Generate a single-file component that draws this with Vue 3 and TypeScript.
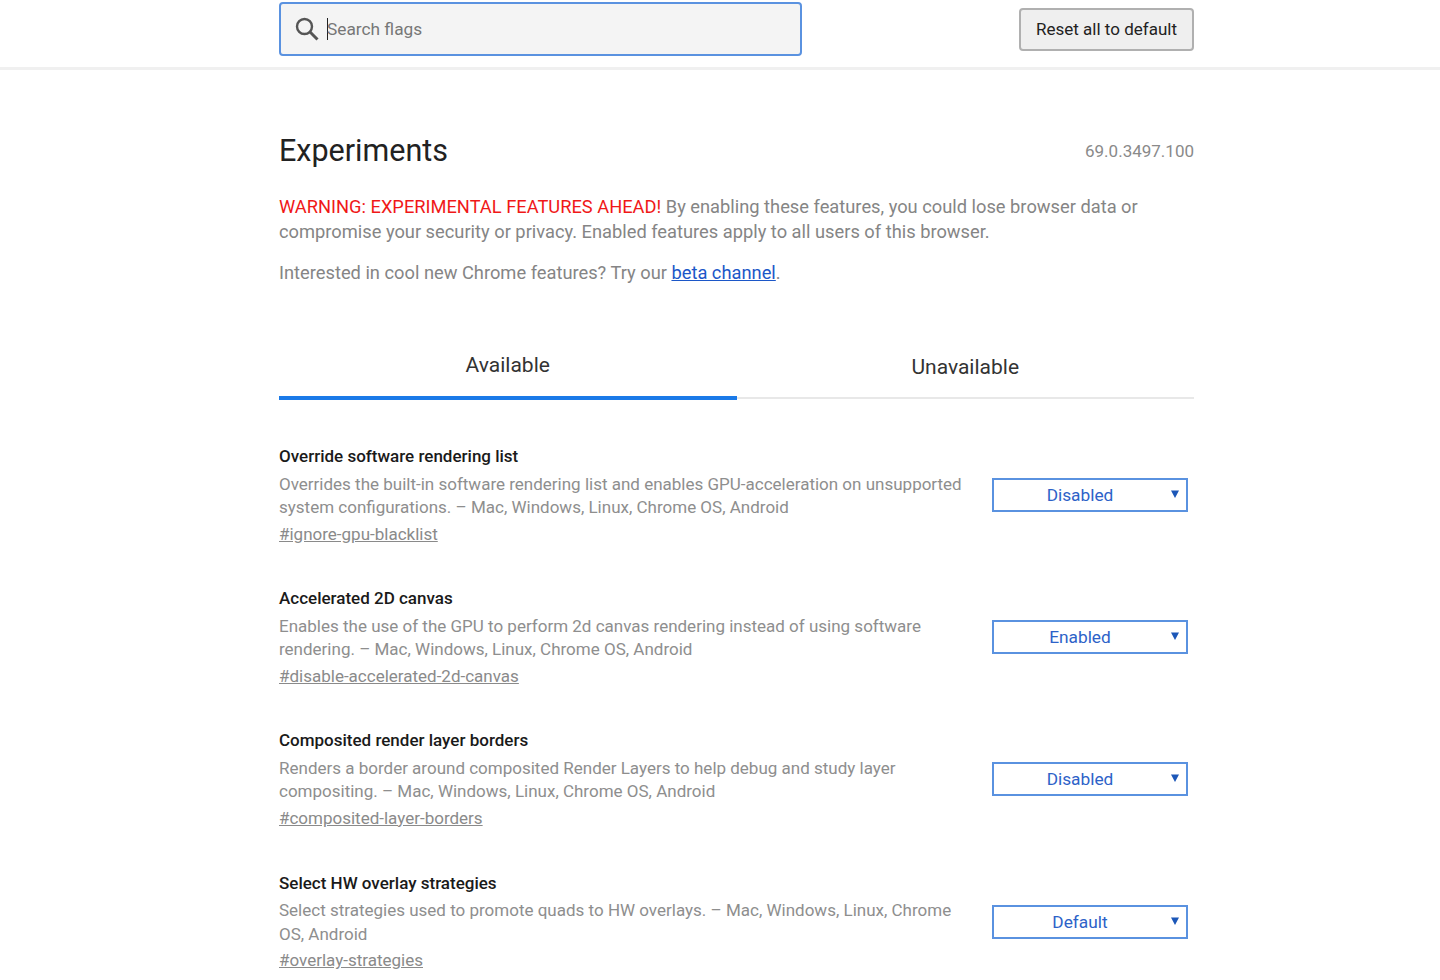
<script setup lang="ts">
interface Flag { title: string; lines: string[]; anchor: string; value: string }
const flags: Flag[] = [
  { title: 'Override software rendering list', lines: ['Overrides the built-in software rendering list and enables GPU-acceleration on unsupported', 'system configurations. – Mac, Windows, Linux, Chrome OS, Android'], anchor: '#ignore-gpu-blacklist', value: 'Disabled' },
  { title: 'Accelerated 2D canvas', lines: ['Enables the use of the GPU to perform 2d canvas rendering instead of using software', 'rendering. – Mac, Windows, Linux, Chrome OS, Android'], anchor: '#disable-accelerated-2d-canvas', value: 'Enabled' },
  { title: 'Composited render layer borders', lines: ['Renders a border around composited Render Layers to help debug and study layer', 'compositing. – Mac, Windows, Linux, Chrome OS, Android'], anchor: '#composited-layer-borders', value: 'Disabled' },
  { title: 'Select HW overlay strategies', lines: ['Select strategies used to promote quads to HW overlays. – Mac, Windows, Linux, Chrome', 'OS, Android'], anchor: '#overlay-strategies', value: 'Default' },
]
</script>

<template>
  <div class="page">
    <header class="top">
      <div class="top-inner">
        <div class="search">
          <svg class="glass" width="26" height="26" viewBox="0 0 26 26" fill="none" stroke="#555" stroke-width="2.4">
            <circle cx="10.5" cy="10.5" r="7.5" />
            <path d="M15.8 15.8L23.5 23.5" stroke-width="3" />
          </svg>
          <span class="caret"></span>
          <span class="placeholder">Search flags</span>
        </div>
        <button class="reset">Reset all to default</button>
      </div>
    </header>
    <main class="main">
      <div class="heading">
        <h1>Experiments</h1>
        <span class="version">69.0.3497.100</span>
      </div>
      <p class="warning"><span class="red">WARNING: EXPERIMENTAL FEATURES AHEAD!</span> By enabling these features, you could lose browser data or<br />compromise your security or privacy. Enabled features apply to all users of this browser.</p>
      <p class="interest">Interested in cool new Chrome features? Try our <a class="beta">beta channel</a>.</p>
      <div class="tabs">
        <div class="tab active">Available</div>
        <div class="tab">Unavailable</div>
      </div>
      <section class="list">
        <article v-for="f in flags" :key="f.anchor" class="flag">
          <div class="info">
            <h2>{{ f.title }}</h2>
            <p class="desc"><template v-for="l in f.lines" :key="l">{{ l }}<br /></template></p>
            <a class="anchor">{{ f.anchor }}</a>
          </div>
          <div class="select">
            <span class="val">{{ f.value }}</span>
            <svg class="arrow" width="8" height="8" viewBox="0 0 8 8"><path d="M0 0.5H8L4 8Z" fill="#1c57b8" /></svg>
          </div>
        </article>
      </section>
    </main>
  </div>
</template>

<style scoped>
.page { height: 980px; overflow: hidden; background: #fff; font-family: Roboto, "Liberation Sans", sans-serif; }
.top { height: 70px; box-sizing: border-box; border-bottom: 3px solid #f0f0f0; }
.top-inner { width: 915px; margin-left: 279px; display: flex; justify-content: space-between; align-items: flex-start; }
.search { width: 523px; height: 54px; margin-top: 2px; box-sizing: border-box; border: 2px solid #5a92e0; border-radius: 4px; background: #f4f4f4; display: flex; align-items: center; padding-left: 13px; }
.glass { flex: none; margin-right: 7px; }
.caret { width: 1px; height: 22px; background: #222; margin-right: -1px; }
.placeholder { font-size: 17.3px; color: #777; }
.reset { width: 175px; height: 43px; margin-top: 8px; box-sizing: border-box; border: 2px solid #b0b0b0; border-radius: 4px; background: #efefef; color: #222; font: 400 17px Roboto, sans-serif; padding: 0 0 1px; }
.main { width: 915px; margin-left: 279px; }
.heading { display: flex; justify-content: space-between; align-items: center; margin-top: 60px; height: 42px; }
h1 { margin: -1px 0 1px; font-weight: 400; font-size: 30.5px; color: #222; }
.version { font-size: 17px; color: #8a8a8a; }
.warning { margin: 22px 0 0; font-size: 18.3px; line-height: 25px; color: #858585; }
.red { color: #f01818; }
.interest { margin: 16px 0 0; font-size: 18.3px; line-height: 25px; color: #858585; }
.beta { color: #1c57c8; text-decoration: underline; }
.tabs { display: flex; margin-top: 55px; height: 59px; }
.tab { flex: 1; box-sizing: border-box; border-bottom: 2px solid #e8e8e8; text-align: center; font-size: 21px; color: #333; padding-top: 15px; }
.tab.active { border-bottom: 4px solid #1a7ae8; padding-top: 13px; margin-bottom: -1px; }
.list { margin-top: 45px; }
.flag { display: flex; justify-content: space-between; height: 142.2px; }
.info { width: 700px; }
h2 { margin: 0; font-size: 17px; font-weight: 500; line-height: 24px; color: #1a1a1a; }
.desc { margin: 4.5px 0 0; font-size: 17px; line-height: 23.5px; color: #8e8e8e; white-space: nowrap; }
.anchor { display: inline-block; margin-top: 2px; font-size: 17px; line-height: 24px; color: #8a8a8a; text-decoration: underline; }
.select { position: relative; width: 196px; height: 34px; margin: 34px 6px 0 0; box-sizing: border-box; border: 2px solid #5a92e0; display: flex; align-items: center; justify-content: center; padding-right: 20px; color: #2d62c8; font-size: 17.3px; }
.arrow { position: absolute; right: 7px; top: 10px; }
</style>
